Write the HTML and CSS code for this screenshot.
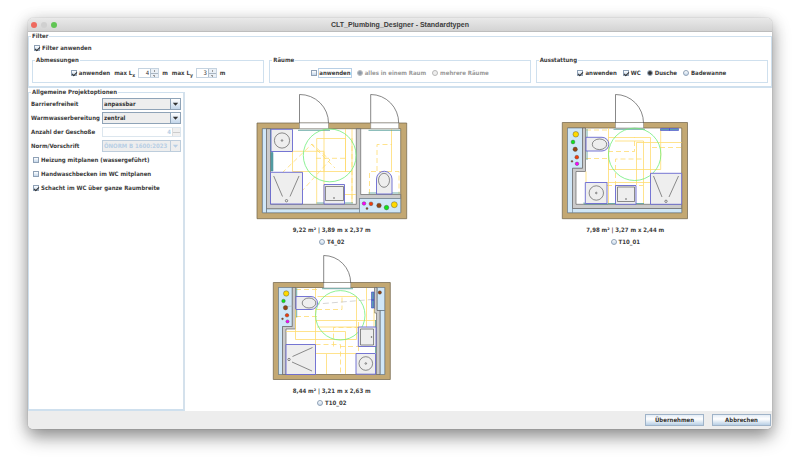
FILE: index.html
```html
<!DOCTYPE html>
<html lang="de">
<head>
<meta charset="utf-8">
<title>CLT_Plumbing_Designer - Standardtypen</title>
<link rel="stylesheet" href="styles.css">
</head>
<body>
<main class="window">
  <header class="titlebar">
    <div class="lights"><span class="light red"></span><span class="light off"></span><span class="light green"></span></div>
    <h1>CLT_Plumbing_Designer - Standardtypen</h1>
  </header>

  <fieldset class="group filter">
    <legend>Filter</legend>
    <label class="option"><input type="checkbox" checked>Filter anwenden</label>
    <div class="filter-groups">
      <fieldset class="group">
        <legend>Abmessungen</legend>
        <div class="row dims">
          <label class="option"><input type="checkbox" checked>anwenden</label>
          <div class="measure">
            <label for="lx">max L<sub>x</sub></label>
            <span class="spinner"><input id="lx" type="number" value="4"><span class="steps"><button type="button" aria-label="mehr"></button><button type="button" aria-label="weniger"></button></span></span>
            <span>m</span>
          </div>
          <div class="measure">
            <label for="ly">max L<sub>y</sub></label>
            <span class="spinner"><input id="ly" type="number" value="3"><span class="steps"><button type="button" aria-label="mehr"></button><button type="button" aria-label="weniger"></button></span></span>
            <span>m</span>
          </div>
        </div>
      </fieldset>
      <fieldset class="group">
        <legend>Räume</legend>
        <div class="row">
          <label class="option focused"><input type="checkbox"><span>anwenden</span></label>
          <label class="option disabled"><input type="radio" name="raum" checked disabled>alles in einem Raum</label>
          <label class="option disabled"><input type="radio" name="raum" disabled>mehrere Räume</label>
        </div>
      </fieldset>
      <fieldset class="group">
        <legend>Ausstattung</legend>
        <div class="row">
          <label class="option"><input type="checkbox" checked>anwenden</label>
          <label class="option"><input type="checkbox" checked>WC</label>
          <label class="option"><input type="radio" name="bad" checked>Dusche</label>
          <label class="option"><input type="radio" name="bad">Badewanne</label>
        </div>
      </fieldset>
    </div>
  </fieldset>

  <div class="content">
    <fieldset class="group project">
      <legend>Allgemeine Projektoptionen</legend>
      <div class="form">
        <label for="barriere">Barrierefreiheit</label>
        <span class="combo"><select id="barriere"><option>anpassbar</option></select><svg viewBox="0 0 10 10"><path d="M2 3.5h6L5 7z"/></svg></span>
        <label for="wasser">Warmwasserbereitung</label>
        <span class="combo"><select id="wasser"><option>zentral</option></select><svg viewBox="0 0 10 10"><path d="M2 3.5h6L5 7z"/></svg></span>
        <label for="geschosse">Anzahl der Geschoße</label>
        <span class="spinner disabled"><input id="geschosse" type="number" value="4" disabled><span class="steps"><button type="button" aria-label="mehr" disabled></button><button type="button" aria-label="weniger" disabled></button></span></span>
        <label for="norm">Norm/Vorschrift</label>
        <span class="combo disabled"><select id="norm" disabled><option>ÖNORM B 1600:2023</option></select><svg viewBox="0 0 10 10"><path d="M2 3.5h6L5 7z"/></svg></span>
      </div>
      <div class="checks">
        <label class="option"><input type="checkbox">Heizung mitplanen (wassergeführt)</label>
        <label class="option"><input type="checkbox">Handwaschbecken im WC mitplanen</label>
        <label class="option"><input type="checkbox" checked>Schacht im WC über ganze Raumbreite</label>
      </div>
    </fieldset>

    <section class="plans">
      <article class="plan">
        <svg width="152" height="127" viewBox="256 93 152 127" role="img" aria-label="Grundriss T4_02">
          <path class="timber" fill-rule="evenodd" d="M257 123H406.7V218.7H257zM262.3 128.7V212.7H400.7V128.7z"/>
          <path class="shaft" d="M262.5 128.7h4v84h-4zM266.5 208.7h93v4h-93z"/>
          <path class="wall" d="M266.5 128.7H270.5V204.3H356.3V128.7H360.7V194.5H400.7V198.5H359.5V208.7H266.5z"/>
          <path class="shaft" d="M359.5 198.5H400.7V212.7H359.5z"/>
          <path class="opening" d="M299.5 123h29v5.7h-29zM370.7 123h28v5.7h-28z"/>
          <path class="door" d="M299.5 123V94.5A28.7 28.5 0 0 1 328.5 123M370.7 123V94.5A28 28.5 0 0 1 398.7 123"/>
          <path class="zone" d="M292.5 151.3H324V171.5H292.5zM316.7 138.5H345.5V171.5H324M324 129V151.3M316.7 138.5V204M324 151.5V204M352 129V203M345.5 129V172M345 171.5H352M391.5 129V171M344 194.5H356"/>
          <path class="zone dash" d="M282 173L312 144L330 160L302 191M311 144L335 168M316 158.3H345M352 138V203M377 171V144.5H392M369.5 194V171.5H399V194"/>
          <path class="teal" d="M298 130.3h32M368.5 130.3h32M270.7 129v22.5M316.5 203h8M345 203h8M368.5 193h8M392 193h8"/>
          <path class="tealfill" d="M271 152.5h2v18.5h-2z"/>
          <circle class="turn" cx="329.7" cy="155.4" r="26.4"/>
          <g class="fixture"><path d="M271 129.3H292.5V151.5H271zM270.5 172.3H302.5V204H270.5zM324 184.5H344.5V204H324zM376.5 194V179A7.7 7.7 0 0 1 392 179V194z"/></g>
          <g class="detail"><circle cx="282" cy="140.5" r="7.6"/><circle cx="282" cy="140.5" r=".8"/><path d="M273.7 176L282.5 196.5M299 176L290 196.5M325.5 186.5H343.5V200.5H325.5z"/><circle cx="286.5" cy="200.7" r="1.2"/><circle cx="334" cy="198" r=".5"/><ellipse cx="384" cy="180.3" rx="5.5" ry="7"/></g>
          <g class="pipes"><circle class="magenta" cx="364" cy="203.5" r="1.8"/><circle class="orange" cx="371" cy="203.8" r="1.9"/><circle class="brown" cx="367" cy="208.5" r="1"/><circle class="brown" cx="379" cy="205.5" r="2.3"/><circle class="lime" cx="386.5" cy="207.6" r="2.3"/><circle class="yellow" cx="394.3" cy="204.7" r="3"/></g>
        </svg>
        <p>9,22 m² | 3,89 m x 2,37 m</p>
        <label class="option"><input type="radio" name="plan">T4_02</label>
      </article>

      <article class="plan">
        <svg width="128" height="127" viewBox="561 93 128 127" role="img" aria-label="Grundriss T10_01">
          <path class="timber" fill-rule="evenodd" d="M562.3 122.5H687.5V218.7H562.3zM567.5 128V212.7H681.7V128z"/>
          <path class="shaft" d="M567.5 128H582.5V168.3H572.5V208.5H681.7V212.7H567.5z"/>
          <path class="shaft" d="M572.5 208.5v4.2"/>
          <path class="wall" d="M582.5 128H585.5V171.5H576V204.3H681.7V208.5H572.5V168.3H582.5z"/>
          <path class="opening" d="M615.5 122.5h28v5.5h-28z"/>
          <path class="door" d="M615.5 123V94.5A28 28.5 0 0 1 643.5 123"/>
          <path class="zone" d="M608.5 137.5H650.5V182.5M608.5 128V204M608.5 169.5H660.7V128M643.5 141V204M636.5 142.5H681.7M636.5 142.5V185M586 171.5V182.5M607 182.5H650M608.5 169.5V151M615 141H643.5"/>
          <path class="zone dash" d="M586 130H608M586 158.5H608M608 151.5H634.5V137M615.5 186V159H643M652 147.5H681M607 185.5H643"/>
          <path class="teal" d="M613.5 129.3h31.5M587 129v8.5M587 151v9M584 202.5v1.5h24M608 203.5h8M636 203.5h8"/>
          <circle class="turn" cx="634.7" cy="154.3" r="26.2"/>
          <path class="radiator" d="M660.5 128.5h9v2h-9zM669.5 128.5h9v2h-9z"/>
          <g class="fixture"><path d="M586 137.3H602A6.8 6.8 0 0 1 602 151H586zM585.3 182.5H607V203.5H585.3zM615.5 185.5H636V204.3H615.5zM650.5 173.3H681.7V204.3H650.5z"/></g>
          <g class="detail"><ellipse cx="599.5" cy="144.3" rx="7.2" ry="5.3"/><circle cx="596.3" cy="193" r="7.2"/><circle cx="596.3" cy="193" r=".8"/><path d="M617.5 187H634.5V201.5H617.5zM653.5 176L662 197M678.5 176L669 197"/><circle cx="626" cy="199" r=".5"/><circle cx="666" cy="201.3" r="1.2"/></g>
          <g class="pipes"><circle class="yellow" cx="575.8" cy="134.3" r="2.8"/><circle class="lime" cx="573" cy="142" r="1.9"/><circle class="brown" cx="575.2" cy="149.3" r="2.2"/><circle class="orange" cx="576.8" cy="157.2" r="1.9"/><circle class="brown" cx="572" cy="161.3" r=".9"/><circle class="magenta" cx="577" cy="163.8" r="1.8"/></g>
        </svg>
        <p>7,98 m² | 3,27 m x 2,44 m</p>
        <label class="option"><input type="radio" name="plan">T10_01</label>
      </article>

      <article class="plan">
        <svg width="120" height="127" viewBox="272 254 120 127" role="img" aria-label="Grundriss T10_02">
          <path class="timber" fill-rule="evenodd" d="M273.3 282.5H390.3V379.5H273.3zM278.5 287.5V374.5H384.7V287.5z"/>
          <path class="shaft" d="M278.5 287.5H292.3V326.5H282.5V374.5H278.5zM377 287.5H384.7V310.5H377zM380 310.5H384.7V374.5H380z"/>
          <path class="wall" d="M292.3 287.5H295.5V329H286V374.5H282.5V326.5H292.3zM374.5 287.5H377V310.5H380V374.5H376.5V313H374.5z"/>
          <path class="opening" d="M323.7 282.5h27v5.5h-27z"/>
          <path class="door" d="M323.7 283V255.5A27 27.5 0 0 1 350.7 283"/>
          <path class="zone" d="M317.5 296.5H356.5V339.5H295.5V309M315.5 288V353.5M286 331.5H345.5V374M315.5 320.5H376M366.5 288V327M326.5 374V353.5H356M315.5 353.5H326.5M317 327H358M374 309V327"/>
          <path class="zone dash" d="M296 289.5H317M296 316.5H317M317 309.5H342V297M333.5 346.5V327.5H358M315.5 344.5H340.5V374M340 346.5H376M358.5 327V320M358.5 346V353"/>
          <path class="axis" d="M287 306.5L378 299"/>
          <path class="teal" d="M322 288.7h31M296.7 288v8.5M296.7 309.5v8M375.5 320v7M375.5 346v7"/>
          <circle class="turn" cx="340.3" cy="315.3" r="24.7"/>
          <path class="radiator" d="M371.5 292h2.5v8h-2.5zM371.5 300h2.5v8h-2.5z"/>
          <g class="fixture"><path d="M296 296.5H311A6.5 6.5 0 0 1 311 309.5H296zM286 344.5H315.5V374.5H286zM358.3 327H376V346.5H358.3zM356 353.5H375.5V374.2H356z"/></g>
          <g class="detail"><ellipse cx="309" cy="303" rx="6.8" ry="5"/><path d="M312.5 347.5L292.5 356.5M312 371L292 362M360.5 329H373.5V345H360.5z"/><circle cx="289" cy="359.5" r="1.2"/><circle cx="371.5" cy="337" r=".5"/><circle cx="365.8" cy="363.5" r="6.8"/><circle cx="365.8" cy="363.5" r=".8"/></g>
          <g class="pipes"><circle class="yellow" cx="286.2" cy="293.5" r="2.7"/><circle class="lime" cx="283.5" cy="301" r="1.8"/><circle class="brown" cx="285.5" cy="307.7" r="2.2"/><circle class="orange" cx="287" cy="315.3" r="1.8"/><circle class="brown" cx="282.5" cy="318.8" r=".9"/><circle class="magenta" cx="287.5" cy="321.5" r="1.6"/><circle class="brown" cx="379.8" cy="292.5" r="1.7"/></g>
        </svg>
        <p>8,44 m² | 3,21 m x 2,63 m</p>
        <label class="option"><input type="radio" name="plan">T10_02</label>
      </article>
    </section>
  </div>

  <footer class="actions">
    <button type="button">Übernehmen</button>
    <button type="button">Abbrechen</button>
  </footer>
</main>
</body>
</html>
```
FILE: styles.css
```css
* {
  box-sizing: border-box;
}

body {
  margin: 0;
  height: 100vh;
  padding: 18px 28px 36px;
  display: flex;
  background: #fff;
  color: #3c3c3c;
  font: bold 6px/8px "DejaVu Sans Condensed", "DejaVu Sans", sans-serif;
}

.window {
  flex: 1;
  display: flex;
  flex-direction: column;
  border-radius: 5px;
  overflow: hidden;
  background: #fff;
  box-shadow: 0 0 1px rgba(0, 0, 0, .4), 0 8px 18px rgba(0, 0, 0, .42), 0 1px 16px rgba(0, 0, 0, .1);
}

.titlebar {
  display: grid;
  grid-template-columns: 1fr auto 1fr;
  align-items: center;
  height: 14px;
  flex: none;
  padding: 0 3px;
  background: linear-gradient(#e9e9e9, #d3d3d3);
  border-bottom: 1px solid #bdbdbd;
}

.titlebar h1 {
  margin: 0;
  font: bold 7px/8px "Liberation Sans", sans-serif;
}

.lights {
  display: flex;
  gap: 4px;
}

.light {
  width: 6px;
  height: 6px;
  border-radius: 50%;
}

.red { background: #ee6a5f; }
.off { background: #d0d0d0; }
.green { background: #61c554; }

.group {
  min-width: 0;
  margin: 0;
  padding: 0;
  border: 1px solid #cfe0ee;
}

legend {
  margin-left: 2px;
  padding: 0 1px;
}

.filter {
  flex: none;
  padding: 4px 3px 3px;
  border-bottom-width: 2px;
}

.filter > legend {
  margin-left: -1px;
}

.filter-groups {
  display: grid;
  grid-template-columns: 8fr 9fr 8fr;
  gap: 5px;
  margin-top: 4px;
}

.row {
  display: flex;
  justify-content: center;
  align-items: center;
  gap: 6px;
  height: 18px;
}

.option {
  display: flex;
  align-items: center;
  gap: 2px;
  height: 8px;
}

.filter > .option,
.checks .option {
  padding-left: 2px;
}

.option input {
  appearance: none;
  flex: none;
  display: grid;
  place-items: center;
  width: 6px;
  height: 6px;
  margin: 0;
  border: 1px solid #8fa1b6;
  background: linear-gradient(#fff, #c3d6ea);
}

.option input[type="radio"] {
  border-radius: 50%;
}

.option input:checked::before {
  content: "";
}

.option input[type="checkbox"]:checked::before {
  width: 4px;
  height: 2px;
  border: solid #333;
  border-width: 0 0 1px 1px;
  transform: rotate(-45deg);
}

.option input[type="radio"]:checked::before {
  width: 4px;
  height: 4px;
  border-radius: 50%;
  background: #333;
}

.option.disabled {
  color: #999;
}

.option.disabled input {
  border-color: #b8b8b8;
  background: #eee;
}

.option.disabled input:checked::before {
  background: #8e9aa8;
}

.focused span {
  outline: 1px solid #b8cfe5;
}

.measure {
  display: flex;
  align-items: center;
  gap: 3px;
}

.dims {
  gap: 4px;
}

sub {
  font-size: 5px;
  line-height: 0;
}

.spinner {
  display: flex;
  height: 10px;
  width: 21px;
  border: 1px solid #c5d3e0;
}

.spinner input {
  appearance: textfield;
  flex: 1;
  min-width: 0;
  padding: 0 1px;
  border: 0;
  background: #fff;
  color: #333;
  font: inherit;
  font-weight: normal;
  text-align: right;
}

.spinner input::-webkit-inner-spin-button {
  appearance: none;
}

.steps {
  display: grid;
  width: 8px;
  gap: 1px;
  background: #a9b6c3;
  border-left: 1px solid #b0bfcd;
}

.steps button {
  min-height: 0;
  padding: 0;
  border: 0;
  background: radial-gradient(circle, #999 0 1px, transparent 1px) #eaf0f6;
}

.spinner.disabled {
  width: auto;
  border-color: #dce6ee;
}

.spinner.disabled input {
  color: #b8cfe5;
  font-weight: bold;
}

.spinner.disabled .steps {
  border-color: #ddd;
  background: #ccc;
}

.spinner.disabled button {
  background: #f0f0f0;
}

.content {
  flex: 1;
  min-height: 0;
  display: grid;
  grid-template-columns: 157px 1fr;
}

.project {
  padding: 2px;
  border-bottom-width: 2px;
  border-right: 2px solid #d4e1ec;
}

.project > legend {
  margin-left: 0;
}

.form {
  display: grid;
  grid-template-columns: auto 79px;
  grid-auto-rows: 12px;
  justify-content: space-between;
  align-items: center;
  row-gap: 2px;
}

.combo {
  display: flex;
  height: 12px;
  border: 1px solid #8fa3b7;
  background: #eee;
}

.combo select {
  appearance: none;
  flex: 1;
  min-width: 0;
  padding: 0 1px;
  border: 0;
  background: transparent;
  color: #333;
  font: inherit;
  opacity: 1;
}

.combo svg {
  width: 10px;
  border-left: 1px solid #8fa3b7;
  background: linear-gradient(#fff, #c3d6ea);
  fill: #333;
}

.combo.disabled,
.combo.disabled svg {
  border-color: #bdcddc;
}

.combo.disabled select {
  color: #b8cfe5;
}

.combo.disabled svg {
  background: #eee;
  fill: #b8cfe5;
}

.checks {
  display: grid;
  gap: 6px;
  margin-top: 4px;
}

.plans {
  display: grid;
  grid-template-columns: 1fr 1fr;
  align-content: start;
  gap: 8px 0;
  padding-top: 5px;
}

.plan {
  display: flex;
  flex-direction: column;
  align-items: center;
}

.plan p {
  margin: 6px 0 4px;
}

.timber { fill: #c3a873; stroke: #6e6248; stroke-width: .7; }
.shaft { fill: #d0e7f8; stroke: #667784; stroke-width: .6; }
.wall { fill: #cbcbcb; stroke: #666; stroke-width: .7; }
.opening { fill: #fff; stroke: #777; stroke-width: .5; }
.door { fill: none; stroke: #555; stroke-width: .7; }
.zone { fill: none; stroke: #ffdc70; stroke-width: .8; }
.dash { stroke-dasharray: 5 3; }
.axis { stroke: #aaa; stroke-width: .5; stroke-dasharray: 6 3; }
.teal { fill: none; stroke: #4c9994; stroke-width: .8; }
.tealfill { fill: #5ba5a7; stroke: #347f91; stroke-width: .5; }
.turn { fill: none; stroke: #70ed7b; stroke-width: .8; }
.radiator { fill: #5c9bb5; stroke: #4545cc; stroke-width: .6; }
.fixture { fill: #eee; stroke: #6767cf; stroke-width: .9; }
.detail { fill: none; stroke: #444; stroke-width: .6; }
.pipes { stroke: #444; stroke-width: .4; }
.magenta { fill: #f0f; }
.orange { fill: #f13b08; }
.brown { fill: #934513; }
.lime { fill: #0de51b; }
.yellow { fill: #ffd900; }

.actions {
  flex: none;
  display: flex;
  justify-content: flex-end;
  gap: 8px;
  padding: 3px 1px;
  background: #ededed;
}

.actions button {
  width: 59px;
  height: 12px;
  padding: 0;
  border: 1px solid #9fb3c8;
  background: linear-gradient(#e4edf6, #fff 40%, #b8cfe5);
  color: #333;
  font: inherit;
}
```
